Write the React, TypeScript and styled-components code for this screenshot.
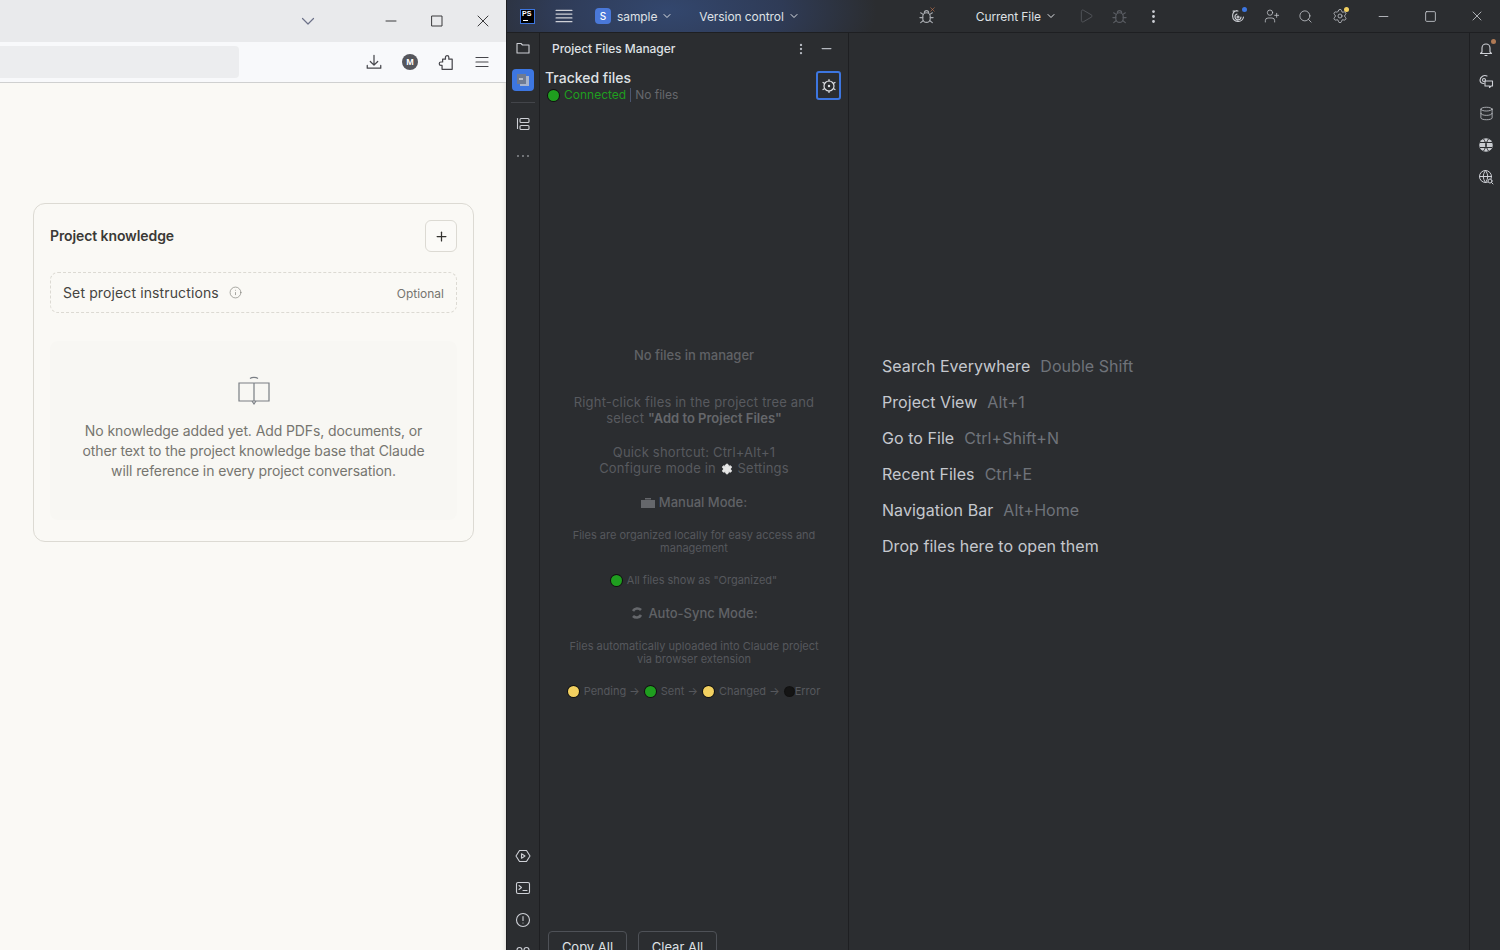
import React from "react";
import styled, { createGlobalStyle } from "styled-components";
import { ChevronDown, Minus, Square, X, Plus, Info, MoreVertical, Search, Play, Database, UserPlus, Settings } from "lucide-react";

const Global = createGlobalStyle`
  html, body { margin: 0; padding: 0; background: #2b2d30; }
  #root { width: 1500px; height: 950px; overflow: hidden; }
`;

const Page = styled.div`
  width: 1500px; height: 950px; display: flex; overflow: hidden;
`;

/* Browser */
const Browser = styled.div`
  width: 506px; flex: none; display: flex; flex-direction: column; background: #faf9f5;
  box-shadow: inset -5px 0 5px -5px rgba(0,0,0,.15);
  font-family: "Inter", "Noto Sans", sans-serif;
`;
const TabBar = styled.div`
  height: 42px; flex: none; background: #e9eaec; display: flex; align-items: center; color: #3a3a3c; box-sizing: border-box;
`;
const TabChevron = styled.span`
  margin-left: 300px; width: 16px; height: 16px; color: #6c7189; display: flex;
`;
const WinButtons = styled.div`
  display: flex; align-items: center; gap: 30px; margin-left: 67px; color: #3a3a3c;
`;
const WinIcon = styled.span`
  width: 16px; height: 16px; display: flex; align-items: center; justify-content: center;
`;
const NavBar = styled.div`
  height: 41px; flex: none; background: #f8f9fb; border-bottom: 1px solid #cfd0d0; box-sizing: border-box; display: flex; align-items: center;
`;
const UrlField = styled.div`
  width: 239px; height: 32px; background: #ecedef; border-radius: 0 4px 4px 0;
`;
const NavIcons = styled.div`
  display: flex; align-items: center; margin-left: 125px; gap: 16px; color: #46464b;
`;
const NavIcon = styled.span`
  width: 20px; height: 20px; display: flex; align-items: center; justify-content: center;
`;
const Avatar = styled.span`
  width: 16px; height: 16px; border-radius: 50%; background: #55565c; color: #fff; font: 700 9px "Liberation Sans", sans-serif;
  display: flex; align-items: center; justify-content: center;
`;
const BrowserBody = styled.div`
  flex: 1; padding: 120px 0 0 33px;
`;
const Card = styled.section`
  width: 441px; height: 339px; box-sizing: border-box; border: 1px solid #dcdad3; border-radius: 12px; padding: 16px;
  display: flex; flex-direction: column;
`;
const CardHeader = styled.div`
  display: flex; align-items: center; justify-content: space-between; height: 32px;
`;
const CardTitle = styled.h2`
  margin: -2px 0 0 0; font-size: 14px; font-weight: 600; color: #3a3936; letter-spacing: -.1px;
`;
const AddButton = styled.button`
  width: 32px; height: 32px; padding: 0; background: #fbfaf7; border: 1px solid #dcdad3; border-radius: 6px; color: #33322f;
  display: flex; align-items: center; justify-content: center;
`;
const Instructions = styled.div`
  margin-top: 20px; height: 41px; box-sizing: border-box; border: 1px dashed #dcdad3; border-radius: 8px; padding: 0 12px;
  display: flex; align-items: center; color: #45443f; font-size: 14px; letter-spacing: .12px;
`;
const InstructionsInfo = styled.span`
  margin-left: 10px; color: #7c7b76; display: flex;
`;
const OptionalTag = styled.span`
  margin-left: auto; font-size: 12px; color: #76756f; letter-spacing: 0; padding-top: 2px;
`;
const EmptyBox = styled.div`
  margin-top: 28px; height: 179px; box-sizing: border-box; background: #f8f7f3; border-radius: 8px; padding: 35px 24px 0;
  display: flex; flex-direction: column; align-items: center;
`;
const EmptyText = styled.p`
  margin: 15px 0 0; text-align: center; color: #76756f; font-size: 14px; line-height: 20px; letter-spacing: -.1px;
`;

/* IDE */
const Ide = styled.div`
  flex: 1; min-width: 0; background: #2b2d30; display: flex; flex-direction: column; color: #dfe1e5;
  font-family: "Inter", "Noto Sans", sans-serif; border-left: 1px solid #1e1f22; box-sizing: border-box; overflow: hidden;
`;
const TopBar = styled.header`
  height: 33px; flex: none; box-sizing: border-box; border-bottom: 1px solid #1e1f22; display: flex; align-items: center;
  background: radial-gradient(ellipse 210px 90px at 160px 10px, #33476e 0%, #2f3b56 55%, #2b2d30 100%);
  font-size: 12.5px;
`;
const Logo = styled.span`
  margin-left: 13px; width: 15px; height: 15px; box-sizing: border-box; background: #000; border: 1px solid #3d76e0; color: #fff;
  font: 700 7px/8px "Liberation Sans", sans-serif; padding-left: 1px; position: relative; flex: none; overflow: hidden;
  &::after { content: ""; position: absolute; left: 2px; bottom: 2px; width: 5px; height: 1px; background: #fff; }
`;
const TopIcon = styled.span<{ $color?: string; $gap?: number }>`
  width: 18px; height: 18px; flex: none; display: flex; align-items: center; justify-content: center; position: relative;
  color: ${p => p.$color || "#ced0d6"}; margin-left: ${p => p.$gap ?? 0}px;
`;
const ProjectBadge = styled.span`
  margin-left: 22px; width: 16px; height: 16px; border-radius: 4px; background: #4a78d8; color: #fff; font-size: 10px; font-weight: 500;
  display: flex; align-items: center; justify-content: center; flex: none;
`;
const TopLabel = styled.span<{ $gap: number }>`
  margin-left: ${p => p.$gap}px; color: #dfe1e5; display: flex; align-items: center; gap: 4px; font-size: 12px; white-space: nowrap; letter-spacing: -.08px;
`;
const Dot = styled.span<{ $color: string }>`
  position: absolute; top: 0; right: 0; width: 5px; height: 5px; border-radius: 50%; background: ${p => p.$color};
`;
const BugMark = styled.span`
  position: absolute; top: -1px; right: 0; color: #c9794f; display: flex;
`;
const IdeBody = styled.div`
  flex: 1; display: flex; min-height: 0; overflow: hidden;
`;
const LeftStrip = styled.nav`
  width: 33px; flex: none; box-sizing: border-box; border-right: 1px solid #1e1f22; display: flex; flex-direction: column; align-items: center; padding-top: 4px;
`;
const StripIcon = styled.span<{ $active?: boolean }>`
  width: 22px; height: 22px; margin-bottom: 10px; flex: none; display: flex; align-items: center; justify-content: center; color: #ced0d6;
  border-radius: 4px; background: ${p => (p.$active ? "#3d76e0" : "transparent")};
`;
const StripDivider = styled.span`
  width: 24px; height: 1px; background: #43454a; margin: 1px 0 10px; flex: none;
`;
const StripSpacer = styled.span`
  height: 668px; flex: none;
`;
const ToolWindow = styled.aside`
  width: 309px; flex: none; box-sizing: border-box; border-right: 1px solid #1e1f22; display: flex; flex-direction: column; min-height: 0;
`;
const ToolHeader = styled.div`
  height: 31px; flex: none; display: flex; align-items: center; padding: 0 14px 0 12px; font-size: 12px; font-weight: 500; color: #dfe1e5; letter-spacing: -.05px;
`;
const ToolTitle = styled.span`
  flex: 1;
`;
const ToolActions = styled.span`
  display: flex; align-items: center; gap: 11px; color: #b4b8bf;
`;
const TrackedRow = styled.div`
  height: 43px; flex: none; display: flex; align-items: flex-start; justify-content: space-between; padding: 5px 7px 0 5px;
`;
const TrackedTitle = styled.div`
  font-size: 14px; line-height: 17px; font-weight: 500; color: #dfe1e5;
`;
const StatusRow = styled.div`
  display: flex; align-items: center; font-size: 12px; line-height: 14px; margin-top: 2px; padding-left: 3px;
`;
const Connected = styled.span`
  color: #1f9e1f; margin-left: 5px; padding-right: 4px; border-right: 1px solid #4b5670;
`;
const NoFiles = styled.span`
  color: #66686d; margin-left: 4px;
`;
const Lamp = styled.span<{ $color: string; $size?: number }>`
  display: inline-block; flex: none; width: ${p => p.$size ?? 11}px; height: ${p => p.$size ?? 11}px; border-radius: 50%;
  background: ${p => p.$color}; box-shadow: 0 0 0 1px #111;
`;
const GearButton = styled.button`
  width: 25px; height: 29px; margin-top: 2px; padding: 0; background: transparent; border: 2px solid #3d76e0; border-radius: 3px; color: #dfe1e5;
  display: flex; align-items: center; justify-content: center; box-sizing: border-box;
`;
const Placeholder = styled.div`
  flex: 1; min-height: 0; padding-top: 235px; text-align: center; color: #5c5e63; display: flex; flex-direction: column; align-items: center;
`;
const PlaceHeading = styled.div<{ $top: number }>`
  font-size: 13px; line-height: 16px; font-weight: 500; margin-top: ${p => p.$top}px; color: #606266; display: flex; align-items: center; gap: 4px;
`;
const PlaceText = styled.div<{ $top: number }>`
  font-size: 13px; line-height: 15.5px; margin-top: ${p => p.$top}px; letter-spacing: .18px; color: #585a5f;
  b { font-weight: 600; color: #65676b; letter-spacing: 0; }
`;
const PlaceSmall = styled.div<{ $top: number }>`
  font-size: 11px; line-height: 13px; margin-top: ${p => p.$top}px; letter-spacing: 0; color: #56585d; display: flex; align-items: center; justify-content: center; flex-wrap: wrap; gap: 0 5px;
`;
const ErrorLabel = styled.span`
  margin-left: -4px;
`;
const InlineGear = styled.span`
  display: inline-flex; vertical-align: -2px; color: #e6e6e6; margin: 0 1px;
`;
const ButtonRow = styled.div`
  flex: none; height: 19px; display: flex; gap: 11px; padding-left: 8px; overflow: visible;
`;
const FooterButton = styled.button`
  width: 79px; height: 30px; box-sizing: border-box; padding: 0; background: transparent; border: 1px solid #4e5157; border-radius: 4px;
  color: #dfe1e5; font: 13px "Inter", sans-serif; flex: none; padding-top: 1px;
`;
const Editor = styled.main`
  flex: 1; min-width: 0; padding: 321px 0 0 33px; display: flex; flex-direction: column; gap: 12px;
`;
const Hint = styled.div`
  font-size: 16px; line-height: 24px; color: #c5c8ce; display: flex; gap: 10px; letter-spacing: .05px;
`;
const Shortcut = styled.span`
  color: #6f737a;
`;
const RightStrip = styled.nav`
  width: 31px; flex: none; box-sizing: border-box; border-left: 1px solid #1e1f22; display: flex; flex-direction: column; align-items: center; padding: 6px 0 0 2px; gap: 12px;
`;
const RightIcon = styled.span`
  width: 20px; height: 20px; display: flex; align-items: center; justify-content: center; position: relative; color: #ced0d6;
`;

const Svg: React.FC<{ s?: number; w?: number; children: React.ReactNode }> = ({ s = 16, w = 1.1, children }) => (
  <svg width={s} height={s} viewBox="0 0 16 16" fill="none" stroke="currentColor" strokeWidth={w} strokeLinecap="round" strokeLinejoin="round">{children}</svg>
);

const BugIcon: React.FC<{ s?: number }> = ({ s = 17 }) => (
  <Svg s={s} w={1.1}>
    <rect x="4.500" y="4.500" width="7" height="9" rx="3.500" />
    <path d="M6 4.500a2 2 0 0 1 4 0M4.500 9H1.800M11.500 9h2.700M4.800 6 2.500 4.500M11.200 6l2.300-1.500M4.800 12 2.500 13.800M11.200 12l2.300 1.800" />
  </Svg>
);

const Hints: [string, string][] = [
  ["Search Everywhere", "Double Shift"],
  ["Project View", "Alt+1"],
  ["Go to File", "Ctrl+Shift+N"],
  ["Recent Files", "Ctrl+E"],
  ["Navigation Bar", "Alt+Home"],
  ["Drop files here to open them", ""],
];

const GREEN = "#1f9e1f";
const YELLOW = "#f2d060";

export default function App() {
  return (
    <Page>
      <Global />
      <Browser>
        <TabBar>
          <TabChevron>
            <Svg s={16} w={1.2}><path d="M2.500 5.500 8 11l5.500-5.500" /></Svg>
          </TabChevron>
          <WinButtons>
            <WinIcon><Svg w={1}><path d="M3 8h10" /></Svg></WinIcon>
            <WinIcon><Svg w={1}><rect x="3" y="3" width="10" height="10" /></Svg></WinIcon>
            <WinIcon><Svg w={1}><path d="M3 3l10 10M13 3 3 13" /></Svg></WinIcon>
          </WinButtons>
        </TabBar>
        <NavBar>
          <UrlField />
          <NavIcons>
            <NavIcon><Svg s={18} w={1.1}><path d="M8 2v8.500M4.700 7.500 8 10.800l3.300-3.300M2 11v2.500h12V11" /></Svg></NavIcon>
            <NavIcon><Avatar>M</Avatar></NavIcon>
            <NavIcon><Svg s={18} w={1.1}><path d="M4.500 14.500V11H3.500a1.500 1.500 0 0 1 0-3H5V5.500h2.500V3.800a1.500 1.500 0 0 1 3 0v1.700H13.500v9z" /></Svg></NavIcon>
            <NavIcon><Svg s={16} w={1.2}><path d="M2 3.500h12M2 8h12M2 12.500h12" /></Svg></NavIcon>
          </NavIcons>
        </NavBar>
        <BrowserBody>
          <Card>
            <CardHeader>
              <CardTitle>Project knowledge</CardTitle>
              <AddButton aria-label="Add"><Plus size={15} strokeWidth={2} /></AddButton>
            </CardHeader>
            <Instructions>
              Set project instructions
              <InstructionsInfo><Info size={13} strokeWidth={1.2} /></InstructionsInfo>
              <OptionalTag>Optional</OptionalTag>
            </Instructions>
            <EmptyBox>
              <svg width="32" height="30" viewBox="0 0 32 30" fill="none" stroke="#7a7e84" strokeWidth="1.200">
                <path d="M1 7h14.500a.5.5 0 0 1 .5.500V25H1zM31 7H16.500a.5.5 0 0 0-.5.500V25h15z" />
                <path d="M12 2.500c2-1.500 6-1.500 8 0M14 25l2 3 2-3" />
              </svg>
              <EmptyText>
                No knowledge added yet. Add PDFs, documents, or<br />
                other text to the project knowledge base that Claude<br />
                will reference in every project conversation.
              </EmptyText>
            </EmptyBox>
          </Card>
        </BrowserBody>
      </Browser>

      <Ide>
        <TopBar>
          <Logo>PS</Logo>
          <TopIcon $gap={20}><Svg s={18} w={1.2}><path d="M1 3h14M1 6.300h14M1 9.700h14M1 13h14" /></Svg></TopIcon>
          <ProjectBadge>S</ProjectBadge>
          <TopLabel $gap={6}>sample <ChevronDown size={12} /></TopLabel>
          <TopLabel $gap={26}>Version control <ChevronDown size={12} /></TopLabel>
          <TopIcon $gap={118} $color="#a8abb0">
            <BugIcon />
            <BugMark><X size={7} strokeWidth={2} /></BugMark>
          </TopIcon>
          <TopLabel $gap={40}>Current File <ChevronDown size={12} /></TopLabel>
          <TopIcon $gap={20} $color="#5a5d63"><Play size={16} strokeWidth={1.2} /></TopIcon>
          <TopIcon $gap={16} $color="#5a5d63"><BugIcon /></TopIcon>
          <TopIcon $gap={16}><MoreVertical size={17} /></TopIcon>
          <TopIcon $gap={66}>
            <Svg w={1.1}><path d="M13.500 9a5.500 5.500 0 1 1-6.500-6.500M11 9a3 3 0 1 1-4-3M3 3h5" /><circle cx="8" cy="9" r="1" /></Svg>
            <Dot $color="#3d76e0" />
          </TopIcon>
          <TopIcon $gap={16}><UserPlus size={16} strokeWidth={1.1} /></TopIcon>
          <TopIcon $gap={16}><Search size={15} strokeWidth={1.2} /></TopIcon>
          <TopIcon $gap={16}>
            <Settings size={16} strokeWidth={1.1} />
            <Dot $color={YELLOW} />
          </TopIcon>
          <TopIcon $gap={26}><Minus size={15} strokeWidth={1.3} /></TopIcon>
          <TopIcon $gap={29}><Square size={13} strokeWidth={1.5} /></TopIcon>
          <TopIcon $gap={28}><X size={16} strokeWidth={1.2} /></TopIcon>
        </TopBar>
        <IdeBody>
          <LeftStrip>
            <StripIcon>
              <Svg w={1.1}><path d="M2 13V3.500h4l1.500 1.500H14V13z" /></Svg>
            </StripIcon>
            <StripIcon $active>
              <svg width="14" height="14" viewBox="0 0 14 14"><rect x="4" y="3" width="9" height="10" fill="#a8b4cc" /><rect x="1" y="1" width="9" height="10" fill="#6f7b92" /><path d="M3 6h4" stroke="#fff" strokeWidth="1" /></svg>
            </StripIcon>
            <StripDivider />
            <StripIcon>
              <Svg w={1.1}><path d="M2.500 2.500v10" /><rect x="5" y="2.500" width="9" height="4" rx="1" /><rect x="5" y="9.500" width="9" height="4" rx="1" /></Svg>
            </StripIcon>
            <StripIcon>
              <Svg w={1.600}><path d="M3 8h.01M8 8h.01M13 8h.01" /></Svg>
            </StripIcon>
            <StripSpacer />
            <StripIcon>
              <Svg w={1.1}><path d="M4.500 2.500h7L15 8l-3.500 5.500h-7L1 8z" /><path d="M6.500 5.800 10 8l-3.500 2.200z" /></Svg>
            </StripIcon>
            <StripIcon>
              <Svg w={1.1}><rect x="1.500" y="2.500" width="13" height="11" rx="1.500" /><path d="m4 5.500 2.500 2L4 9.500M8 10.500h4" /></Svg>
            </StripIcon>
            <StripIcon>
              <Svg w={1.1}><circle cx="8" cy="8" r="6.500" /><path d="M8 4.500v4M8 11h.01" /></Svg>
            </StripIcon>
            <StripIcon>
              <Svg w={1.1}><circle cx="4.500" cy="6" r="2.500" /><circle cx="11.500" cy="6" r="2.500" /></Svg>
            </StripIcon>
          </LeftStrip>
          <ToolWindow>
            <ToolHeader>
              <ToolTitle>Project Files Manager</ToolTitle>
              <ToolActions>
                <MoreVertical size={14} />
                <Minus size={15} />
              </ToolActions>
            </ToolHeader>
            <TrackedRow>
              <div>
                <TrackedTitle>Tracked files</TrackedTitle>
                <StatusRow>
                  <Lamp $color={GREEN} />
                  <Connected>Connected</Connected>
                  <NoFiles>No files</NoFiles>
                </StatusRow>
              </div>
              <GearButton aria-label="Settings">
                <Svg s={16} w={1.2}><circle cx="8" cy="8" r="5" /><circle cx="8" cy="8" r=".6" /><path d="M8 1.500V3M8 13v1.500M2 4.500l1.300.8M12.700 10.700l1.300.8M2 11.500l1.300-.8M12.700 5.300 14 4.500" /></Svg>
              </GearButton>
            </TrackedRow>
            <Placeholder>
              <PlaceHeading $top={0}>No files in manager</PlaceHeading>
              <PlaceText $top={32}>
                Right-click files in the project tree and<br />
                select <b>"Add to Project Files"</b>
              </PlaceText>
              <PlaceText $top={19}>
                Quick shortcut: Ctrl+Alt+1<br />
                Configure mode in <InlineGear><Settings size={12} fill="#e6e6e6" color="#e6e6e6" /></InlineGear> Settings
              </PlaceText>
              <PlaceHeading $top={18}>
                <svg width="14" height="11" viewBox="0 0 14 11"><path d="M0 3h14v8H0zM4 1h6v1.500H4z" fill="#65676b" /></svg>
                Manual Mode:
              </PlaceHeading>
              <PlaceSmall $top={19}>Files are organized locally for easy access and<br />management</PlaceSmall>
              <PlaceSmall $top={19}><Lamp $color={GREEN} /> All files show as "Organized"</PlaceSmall>
              <PlaceHeading $top={18}>
                <svg width="14" height="14" viewBox="0 0 14 14" fill="none" stroke="#65676b" strokeWidth="2.600"><path d="M11 4a5 5 0 0 0-8 1M3 10a5 5 0 0 0 8-1" /></svg>
                Auto-Sync Mode:
              </PlaceHeading>
              <PlaceSmall $top={19}>Files automatically uploaded into Claude project<br />via browser extension</PlaceSmall>
              <PlaceSmall $top={19}>
                <Lamp $color={YELLOW} /> Pending →
                <Lamp $color={GREEN} /> Sent →
                <Lamp $color={YELLOW} /> Changed →
                <Lamp $color="#141414" $size={9} />
                <ErrorLabel>Error</ErrorLabel>
              </PlaceSmall>
            </Placeholder>
            <ButtonRow>
              <FooterButton>Copy All</FooterButton>
              <FooterButton>Clear All</FooterButton>
            </ButtonRow>
          </ToolWindow>
          <Editor>
            {Hints.map(([a, b]) => (
              <Hint key={a}>{a}{b && <Shortcut>{b}</Shortcut>}</Hint>
            ))}
          </Editor>
          <RightStrip>
            <RightIcon>
              <Svg w={1.1}><path d="M4 11V7a4 4 0 0 1 8 0v4l1.500 1.500h-11zM7 14.500h2" /></Svg>
              <Dot $color="#b07a55" />
            </RightIcon>
            <RightIcon>
              <Svg w={1.1}><path d="M9 3a5 5 0 0 0-7 4c0 2 1.500 3.500 4 3.500" /><path d="M7 8h7.500v5h-1.500l-1.500 1.500V13H7z" /><circle cx="6" cy="7" r="1.500" /></Svg>
            </RightIcon>
            <RightIcon><Database size={15} strokeWidth={1.2} /></RightIcon>
            <RightIcon>
              <svg width="16" height="16" viewBox="0 0 16 16"><circle cx="8" cy="8" r="6.800" fill="#c9cbd0" /><path d="M2 5.500h12M2 10.500h12M5.500 2c3 4 3 8 0 12M10.500 2c-3 4-3 8 0 12" stroke="#2b2d30" strokeWidth="1" fill="none" /></svg>
            </RightIcon>
            <RightIcon>
              <Svg w={1}><circle cx="7.500" cy="7.500" r="6" /><path d="M1.500 7.500h12M7.500 1.500c-3 4-3 8 0 12M7.500 1.500c3 4 3 8 0 12" /><circle cx="12" cy="12" r="2" fill="#2b2d30" /><path d="m13.500 13.500 1.500 1.500" /></Svg>
            </RightIcon>
          </RightStrip>
        </IdeBody>
      </Ide>
    </Page>
  );
}
